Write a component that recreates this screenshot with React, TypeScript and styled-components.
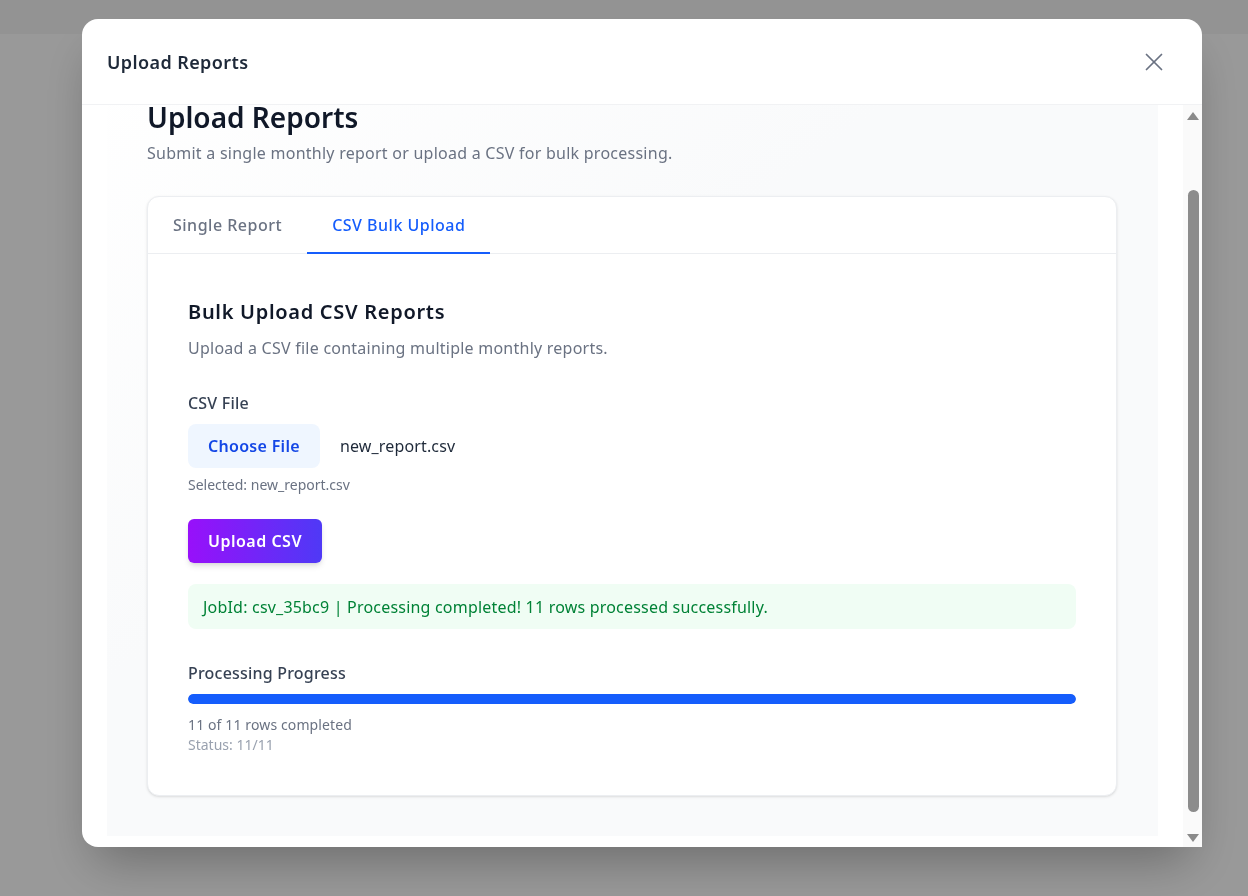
import React, { useLayoutEffect, useRef } from "react";
import styled, { createGlobalStyle } from "styled-components";
import { X } from "lucide-react";

const GlobalStyle = createGlobalStyle`
  html, body {
    margin: 0;
    padding: 0;
  }
  body {
    font-family: "Noto Sans", "Open Sans", sans-serif;
    color: #1e2939;
    -webkit-font-smoothing: antialiased;
  }
  * {
    box-sizing: border-box;
  }
`;

const Page = styled.div`
  min-height: 100vh;
  background: #ffffff;
`;

const PageTopBar = styled.div`
  height: 34px;
  background: #f6f6f6;
`;

const Overlay = styled.div`
  position: fixed;
  inset: 0;
  background: rgba(0, 0, 0, 0.4);
  padding: 19px 0 0 82px;
`;

const Modal = styled.div`
  width: 1120px;
  height: 828px;
  background: #ffffff;
  border-radius: 16px 16px 0 16px;
  box-shadow: 0 25px 50px -12px rgba(0, 0, 0, 0.3);
  display: flex;
  flex-direction: column;
`;

const ModalHeader = styled.div`
  height: 86px;
  flex-shrink: 0;
  display: flex;
  align-items: center;
  justify-content: space-between;
  padding: 0 33px 0 25px;
  border-bottom: 1px solid #f1f2f4;
`;

const ModalTitle = styled.h2`
  margin: 0;
  font-size: 18px;
  font-weight: 600;
  letter-spacing: 0.4px;
  color: #1e2939;
`;

const CloseButton = styled.button`
  border: 0;
  background: none;
  padding: 0;
  display: flex;
  color: #6a7282;
  cursor: pointer;
`;

const ModalBody = styled.div`
  flex: 1;
  min-height: 0;
  display: flex;
`;

const ScrollArea = styled.div`
  flex: 1;
  overflow-y: scroll;
  scrollbar-width: none;
  padding: 24px 25px 34px 25px;
`;

const ScrollRail = styled.div`
  width: 19px;
  flex-shrink: 0;
  background: #fafafa;
  display: flex;
  flex-direction: column;
  align-items: center;
  padding: 7px 0 5px 1px;
`;

const Arrow = styled.div<{ $down?: boolean }>`
  width: 0;
  height: 0;
  border-left: 6.5px solid transparent;
  border-right: 6.5px solid transparent;
  ${(p) =>
    p.$down ? "border-top: 8px solid #8a8a8a;" : "border-bottom: 8px solid #8a8a8a;"}
`;

const ScrollTrack = styled.div`
  flex: 1;
  width: 100%;
  display: flex;
  justify-content: center;
`;

const ScrollThumb = styled.div`
  width: 11px;
  height: 622px;
  margin-top: 70px;
  border-radius: 6px;
  background: #8c8c8c;
`;

const Content = styled.div`
  padding: 40px 41px 40px 40px;
  background: linear-gradient(to bottom right, #ffffff, #f9fafb 40%);
`;

const PageHeading = styled.h1`
  margin: 0;
  font-size: 28px;
  line-height: 36px;
  font-weight: 600;
  color: #101828;
`;

const PageSubtitle = styled.p`
  margin: 6px 0 0;
  font-size: 16px;
  line-height: 24px;
  letter-spacing: 0.25px;
  color: #6a7282;
`;

const Card = styled.div`
  margin-top: 31px;
  background: #ffffff;
  border: 1px solid #eceef1;
  border-radius: 12px;
  box-shadow: 0 1px 3px rgba(0, 0, 0, 0.1), 0 1px 2px -1px rgba(0, 0, 0, 0.08);
`;

const TabList = styled.div`
  display: flex;
  border-bottom: 1px solid #eceef1;
`;

const Tab = styled.button<{ $active?: boolean }>`
  height: 57px;
  padding: 0 25px;
  border: 0;
  background: none;
  font-family: inherit;
  font-size: 16px;
  font-weight: 500;
  letter-spacing: 0.5px;
  color: ${(p) => (p.$active ? "#155dfc" : "#6a7282")};
  border-bottom: 2px solid ${(p) => (p.$active ? "#155dfc" : "transparent")};
  margin-bottom: -1px;
  cursor: pointer;
`;

const Panel = styled.div`
  padding: 44px 40px 40px 40px;
`;

const SectionTitle = styled.h3`
  margin: 0;
  font-size: 20px;
  line-height: 28px;
  font-weight: 600;
  letter-spacing: 0.7px;
  color: #101828;
`;

const SectionText = styled.p`
  margin: 10px 0 0;
  font-size: 16px;
  line-height: 24px;
  letter-spacing: 0.24px;
  color: #6a7282;
`;

const FieldLabel = styled.div<{ $mt?: number }>`
  margin-top: ${(p) => p.$mt ?? 0}px;
  font-size: 16px;
  line-height: 24px;
  font-weight: 500;
  letter-spacing: 0.2px;
  color: #364153;
`;

const FileRow = styled.div`
  margin-top: 9px;
  display: flex;
  align-items: center;
  gap: 20px;
`;

const ChooseButton = styled.button`
  height: 44px;
  padding: 0 20px;
  border: 0;
  border-radius: 8px;
  background: #eff6ff;
  color: #1447e6;
  font-family: inherit;
  font-size: 16px;
  font-weight: 600;
  letter-spacing: 0.3px;
  cursor: pointer;
`;

const FileName = styled.span`
  font-size: 16px;
  letter-spacing: 0.15px;
  color: #1e2939;
`;

const Hint = styled.div<{ $light?: boolean }>`
  font-size: 14px;
  line-height: 20px;
  color: ${(p) => (p.$light ? "#99a1af" : "#6a7282")};
`;

const SelectedHint = styled(Hint)`
  margin-top: 7px;
`;

const UploadButton = styled.button`
  margin-top: 24px;
  height: 44px;
  padding: 0 20px;
  border: 0;
  border-radius: 6px;
  background: linear-gradient(to right, #9810fa, #4f39f6);
  color: #ffffff;
  font-family: inherit;
  font-size: 16px;
  font-weight: 600;
  letter-spacing: 0.5px;
  box-shadow: 0 4px 6px -1px rgba(0, 0, 0, 0.12), 0 2px 4px -2px rgba(0, 0, 0, 0.1);
  cursor: pointer;
`;

const Alert = styled.div`
  margin-top: 21px;
  height: 45px;
  display: flex;
  align-items: center;
  padding: 0 15px;
  border-radius: 8px;
  background: #f0fdf4;
  color: #008236;
  font-size: 16px;
  letter-spacing: 0.2px;
`;

const ProgressTrack = styled.div`
  margin-top: 9px;
  height: 10px;
  border-radius: 999px;
  background: #e5e7eb;
  overflow: hidden;
`;

const ProgressFill = styled.div`
  height: 100%;
  border-radius: 999px;
  background: #155dfc;
`;

const ProgressText = styled(Hint)`
  margin-top: 11px;
  letter-spacing: 0.12px;
`;

export default function App() {
  const scrollRef = useRef<HTMLDivElement>(null);
  const done = 11;
  const total = 11;

  useLayoutEffect(() => {
    if (scrollRef.current) scrollRef.current.scrollTop = 70;
  }, []);

  return (
    <>
      <GlobalStyle />
      <Page>
        <PageTopBar />
      </Page>
      <Overlay>
        <Modal>
          <ModalHeader>
            <ModalTitle>Upload Reports</ModalTitle>
            <CloseButton aria-label="Close">
              <X size={30} strokeWidth={1.4} />
            </CloseButton>
          </ModalHeader>
          <ModalBody>
            <ScrollArea ref={scrollRef}>
              <Content>
                <PageHeading>Upload Reports</PageHeading>
                <PageSubtitle>
                  Submit a single monthly report or upload a CSV for bulk processing.
                </PageSubtitle>
                <Card>
                  <TabList>
                    <Tab>Single Report</Tab>
                    <Tab $active>CSV Bulk Upload</Tab>
                  </TabList>
                  <Panel>
                    <SectionTitle>Bulk Upload CSV Reports</SectionTitle>
                    <SectionText>Upload a CSV file containing multiple monthly reports.</SectionText>
                    <FieldLabel $mt={31}>CSV File</FieldLabel>
                    <FileRow>
                      <ChooseButton>Choose File</ChooseButton>
                      <FileName>new_report.csv</FileName>
                    </FileRow>
                    <SelectedHint>Selected: new_report.csv</SelectedHint>
                    <UploadButton>Upload CSV</UploadButton>
                    <Alert>
                      JobId: csv_35bc9 | Processing completed! 11 rows processed successfully.
                    </Alert>
                    <FieldLabel $mt={32}>Processing Progress</FieldLabel>
                    <ProgressTrack>
                      <ProgressFill style={{ width: `${(done / total) * 100}%` }} />
                    </ProgressTrack>
                    <ProgressText>
                      {done} of {total} rows completed
                    </ProgressText>
                    <Hint $light>
                      Status: {done}/{total}
                    </Hint>
                  </Panel>
                </Card>
              </Content>
            </ScrollArea>
            <ScrollRail>
              <Arrow />
              <ScrollTrack>
                <ScrollThumb />
              </ScrollTrack>
              <Arrow $down />
            </ScrollRail>
          </ModalBody>
        </Modal>
      </Overlay>
    </>
  );
}
